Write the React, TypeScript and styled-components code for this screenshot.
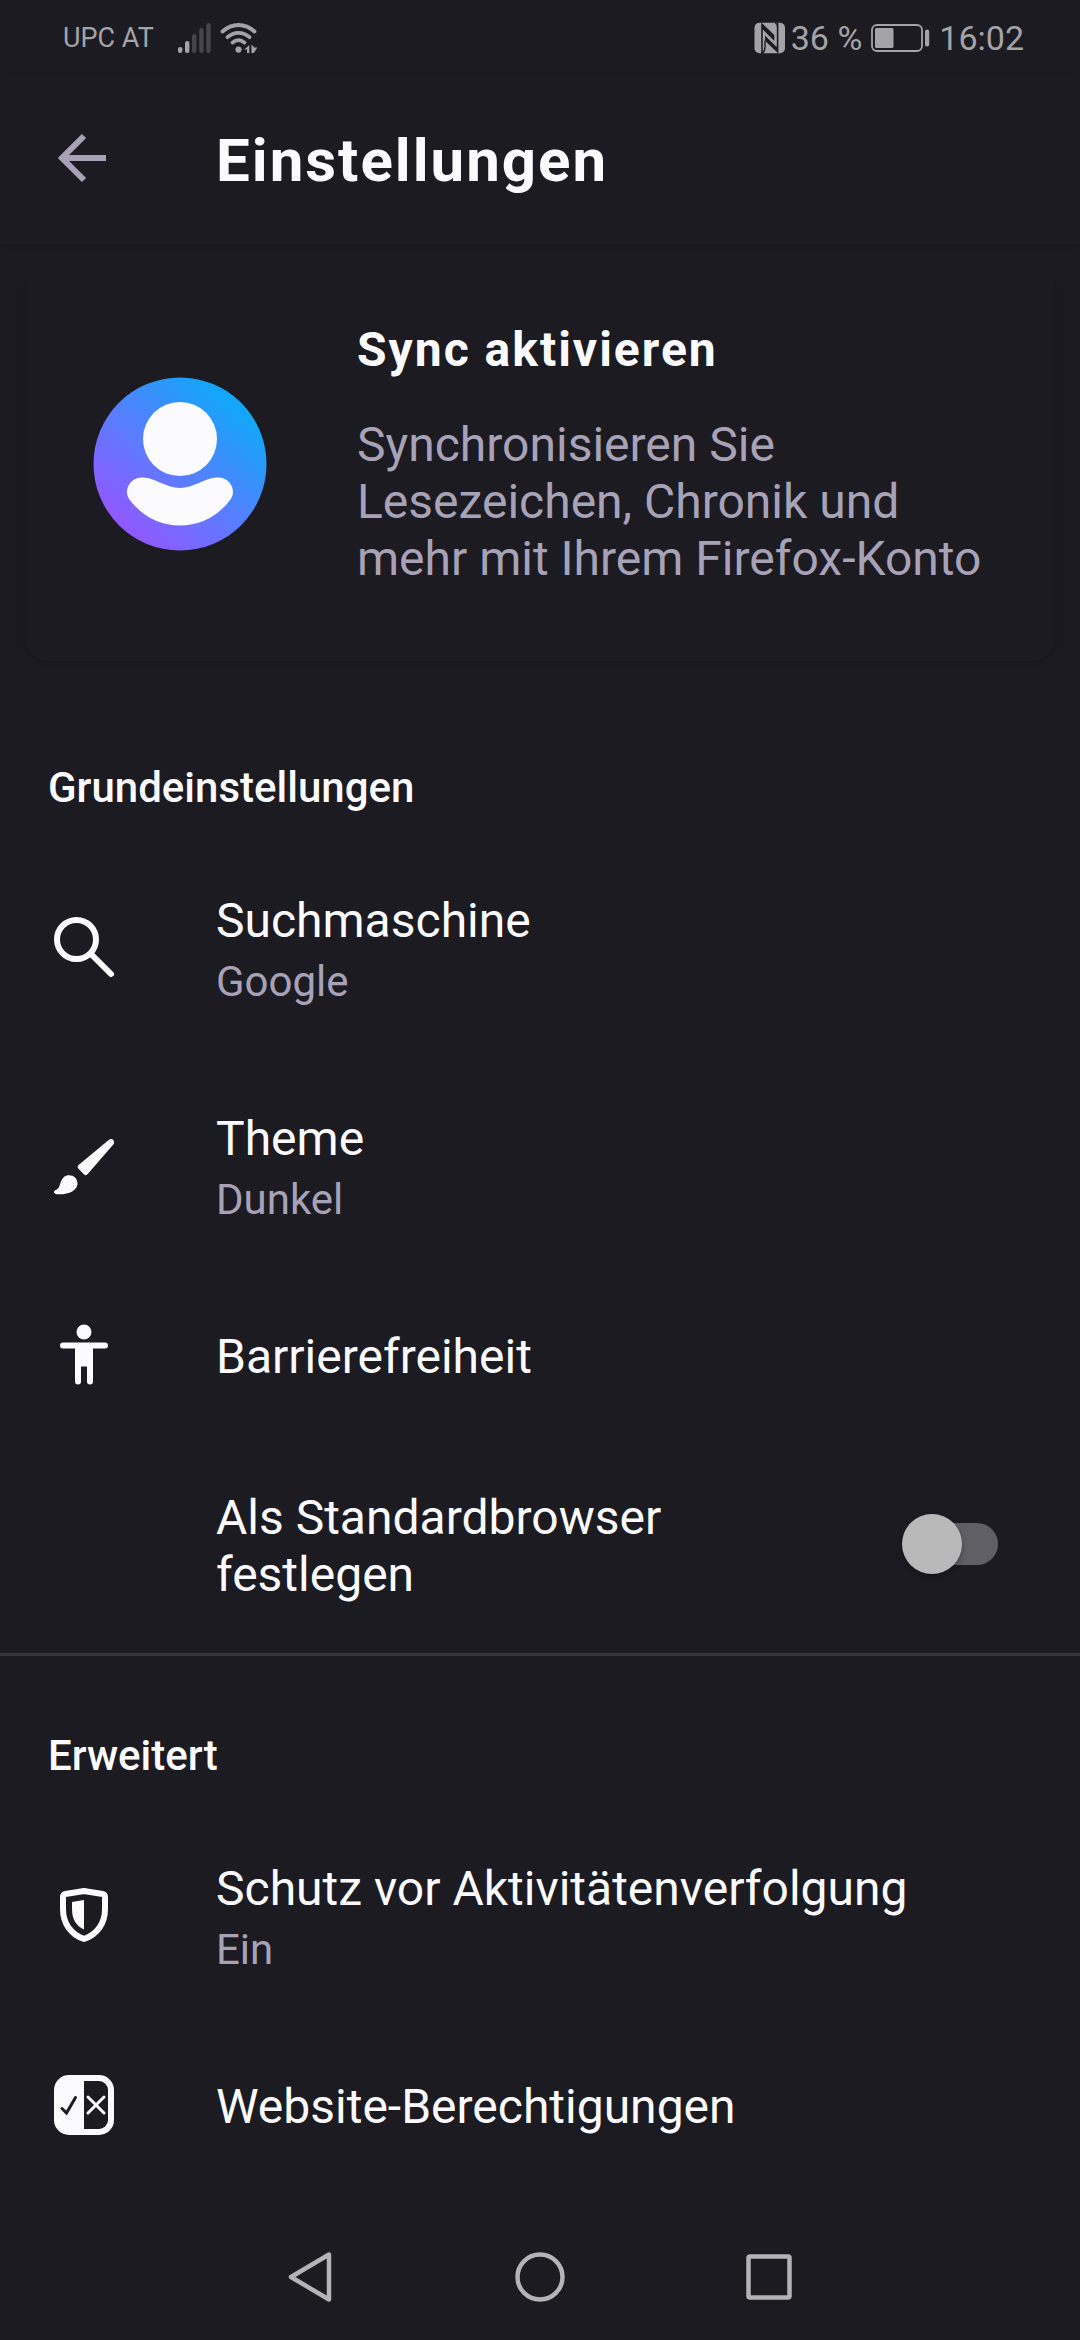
import React, { useState } from "react";
import styled, { createGlobalStyle } from "styled-components";

const color = {
  bg: "#1c1b22",
  text: "#fbfbfe",
  muted: "#a7a2b7",
  status: "#a4a3a8",
  nav: "#b4b3b6",
  divider: "#37363d",
};

const GlobalStyle = createGlobalStyle`
  *, *::before, *::after { box-sizing: border-box; }
  body {
    margin: 0;
    background: ${color.bg};
    color: ${color.text};
    font-family: Roboto, "Noto Sans", sans-serif;
  }
  button { font: inherit; color: inherit; background: none; border: 0; padding: 0; text-align: left; cursor: pointer; }
  h1, h2, p { margin: 0; }
  svg { display: block; flex: none; }
`;

const Screen = styled.div`
  display: flex;
  flex-direction: column;
  min-height: 100vh;
`;

const StatusBar = styled.div`
  display: flex;
  align-items: center;
  justify-content: space-between;
  height: 76px;
  padding: 0 56px 0 63px;
  color: ${color.status};
`;

const StatusGroup = styled.div<{ $gap: number }>`
  display: flex;
  align-items: center;
  gap: ${(p) => p.$gap}px;
`;

const Carrier = styled.span`
  font-size: 27px;
  line-height: 32px;
  margin-right: 16px;
`;

const StatusText = styled.span`
  font-size: 34px;
  line-height: 42px;
`;

const BatteryStatus = styled.span`
  display: flex;
  align-items: center;
  gap: 5px;
`;

const Toolbar = styled.header`
  display: flex;
  align-items: center;
  gap: 96px;
  height: 168px;
  padding: 0 48px;
  box-shadow: 0 2px 12px rgba(0, 0, 0, 0.16);
`;

const Title = styled.h1`
  padding-top: 2px;
  font-size: 60px;
  line-height: 70px;
  font-weight: 700;
  letter-spacing: 2px;
`;

const Main = styled.main`
  flex: 1;
`;

const SyncCard = styled.button`
  display: flex;
  align-items: center;
  gap: 90px;
  width: calc(100% - 50px);
  margin: 23px 25px 27px;
  padding: 54px 60px 74px 68px;
  border-radius: 24px;
  background: ${color.bg};
  box-shadow: 0 2px 10px rgba(0, 0, 0, 0.16);
`;

const AvatarBox = styled.span`
  margin-top: 20px;
`;

const SyncText = styled.span`
  display: flex;
  flex: 1;
  flex-direction: column;
  gap: 38px;
  font-size: 48px;
  line-height: 57px;
`;

const SyncTitle = styled.strong`
  font-weight: 700;
  letter-spacing: 2px;
`;

const SyncSummary = styled.span`
  color: ${color.muted};
`;

const Section = styled.section`
  & + & {
    border-top: 3px solid ${color.divider};
  }
`;

const SectionTitle = styled.h2`
  padding: 75px 48px 26px;
  font-size: 42px;
  line-height: 49px;
  font-weight: 500;
`;

const Row = styled.button`
  display: flex;
  align-items: center;
  width: 100%;
  gap: 96px;
  padding: 0 48px;
`;

const RowText = styled.span`
  display: flex;
  flex: 1;
  flex-direction: column;
  gap: 8px;
  padding: 54px 0 50px;
`;

const RowTitle = styled.span`
  font-size: 48px;
  line-height: 57px;
`;

const RowSummary = styled.span`
  font-size: 42px;
  line-height: 49px;
  color: ${color.muted};
`;

const SwitchRow = styled.label`
  display: flex;
  align-items: center;
  gap: 60px;
  padding: 0 82px 0 216px;
  cursor: pointer;
`;

const Switch = styled.input`
  appearance: none;
  position: relative;
  flex: none;
  width: 96px;
  height: 60px;
  margin: 0;
  cursor: pointer;

  &::before {
    content: "";
    position: absolute;
    inset: 9px 0 9px 6px;
    border-radius: 21px;
    background: #605f65;
  }

  &::after {
    content: "";
    position: absolute;
    top: 0;
    left: 0;
    width: 60px;
    height: 60px;
    border-radius: 50%;
    background: #b9b9b9;
    box-shadow: 0 3px 6px rgba(0, 0, 0, 0.3);
  }

  &:checked::after {
    left: 36px;
    background: #9059ff;
  }
`;

const NavBar = styled.nav`
  display: flex;
  align-items: center;
  justify-content: center;
  gap: 157px;
  height: 126px;
  color: ${color.nav};
`;

const SignalIcon = () => (
  <svg width="34" height="32" viewBox="0 0 34 32" fill="currentColor" aria-hidden="true">
    <rect x="0" y="25" width="4.400" height="6" rx="2" />
    <rect x="7" y="19" width="4.400" height="12" rx="2" />
    <g opacity="0.3">
      <rect x="14" y="12" width="4.400" height="19" rx="2" />
      <rect x="21.200" y="6" width="4.400" height="25" rx="2" />
      <rect x="28.300" y="1" width="4.400" height="30" rx="2" />
    </g>
  </svg>
);

const WifiIcon = () => (
  <svg width="38" height="32" viewBox="0 0 38 32" fill="none" stroke="currentColor" strokeWidth="3.800" strokeLinecap="round" aria-hidden="true">
    <path d="M2.500 9.500C12 .800 25 .800 34.500 9.500" />
    <path d="M7.500 15.200C14 9.300 23 9.300 29.500 15.200" />
    <path d="M12.500 20.600C16.200 17.300 20.800 17.300 24.500 20.600" />
    <circle cx="18.500" cy="27.600" r="3.100" fill="currentColor" stroke="none" />
    <path d="M29.300 23v8h-2.300v-3.600h-2.600zM31.500 23l.6 0 2.100 2.600h3.200l-3.600 5.400h-2.300z" fill="currentColor" stroke="none" />
  </svg>
);

const NfcIcon = () => (
  <svg width="32" height="32" viewBox="0 0 32 32" aria-hidden="true">
    <rect x="0.500" y="0.800" width="30.500" height="30.400" rx="5" fill="currentColor" />
    <g fill={color.bg}>
      <path d="M7.200 0.500L20.300 13V19L8.800 7.600V31.500H7.200z" />
      <path d="M11 13.500L20.800 23.200C22.600 25 22.800 26.500 22.800 20V0.500H24.400V31.500L11 18.800z" />
    </g>
    <path d="M20.300 0.800C22 2 22.800 3.500 22.800 6V0.800z" fill={color.bg} />
    <path d="M11 18.800V25C11 28.500 9.800 30.500 8 31.500" fill="none" stroke={color.bg} strokeWidth="1.400" />
  </svg>
);

const BatteryIcon = () => (
  <svg width="59" height="28" viewBox="0 0 59 28" aria-hidden="true">
    <rect x="1" y="1" width="50" height="26" rx="5" fill="none" stroke="currentColor" strokeWidth="1.800" />
    <rect x="4" y="4" width="18.500" height="20" rx="1.500" fill="currentColor" />
    <rect x="54" y="5.500" width="4.200" height="17" rx="2" fill="currentColor" />
  </svg>
);

const BackIcon = () => (
  <svg width="72" height="72" viewBox="0 0 72 72" fill="none" stroke={color.muted} strokeWidth="6" aria-hidden="true">
    <path d="M58 34H14M36 12L14 34l22 22" />
  </svg>
);

const AvatarIcon = () => (
  <svg width="174" height="174" viewBox="0 0 174 174" aria-hidden="true">
    <defs>
      <linearGradient id="avatar" x1="0.180" y1="0.860" x2="0.820" y2="0.140">
        <stop offset="0" stopColor="#9059ff" />
        <stop offset="0.500" stopColor="#5480ff" />
        <stop offset="1" stopColor="#10a8f8" />
      </linearGradient>
    </defs>
    <circle cx="87" cy="87" r="86.500" fill="url(#avatar)" />
    <circle cx="87" cy="62" r="37" fill={color.text} />
    <path
      d="M50 100.500C62 101 74 111 87 111s25-10 37-10.500c10-.5 16 7 16 14.500 0 5-3 8.500-7 13-12 13-28 20.500-46 20.500s-34-7.500-46-20.500c-4-4.500-7-8-7-13 0-7.500 6-15 16-14.500z"
      fill={color.text}
    />
  </svg>
);

const RowIcon = ({ children }: { children: React.ReactNode }) => (
  <svg width="72" height="72" viewBox="0 0 72 72" fill="currentColor" aria-hidden="true">
    {children}
  </svg>
);

const searchIcon = (
  <g fill="none" stroke="currentColor" strokeWidth="6" strokeLinecap="round">
    <circle cx="28.500" cy="28.500" r="19.500" />
    <path d="M43 43l20 20" />
  </g>
);

const brushIcon = (
  <>
    <path d="M61 10.800c3-2.200 6.800 1.400 4.500 4.500L39.500 45.200c-1 1.200-2.400 1.200-3.400.2l-5.800-5.800c-1-1-.9-2.500.3-3.500z" />
    <path d="M21 46.200c4.800 0 8.500 3.500 8.500 8.200C29.500 61.500 20 66 9 65.200c-3.400-.2-4-3.200-1.200-4.200 3-1.200 3.600-4 4.800-7.600 1.400-4.500 4.300-7.200 8.400-7.200z" />
  </>
);

const accessibilityIcon = (
  <>
    <circle cx="36" cy="13" r="7.500" />
    <path d="M15 23.500h42a3 3 0 0 1 0 6H45v33a3 3 0 0 1-6 0v-15h-6v15a3 3 0 0 1-6 0v-33H15a3 3 0 0 1 0-6z" />
  </>
);

const shieldIcon = (
  <>
    <path
      d="M36 12l18.500 3c1.600.3 2.500 1.300 2.500 3v12c0 14-7.500 25.500-21 30-13.500-4.500-21-16-21-30V18c0-1.700.9-2.700 2.500-3z"
      fill="none"
      stroke="currentColor"
      strokeWidth="6"
      strokeLinejoin="round"
    />
    <path d="M36 21v29.500C28 47 24 40 24 30v-7z" />
  </>
);

const permissionsIcon = (
  <>
    <rect x="6" y="6" width="60" height="60" rx="15" />
    <path d="M36 12h15a9 9 0 0 1 9 9v30a9 9 0 0 1-9 9H36z" fill={color.bg} />
    <path d="M14 39.500l4.500 4.500L27.500 28.500" fill="none" stroke={color.bg} strokeWidth="3" strokeLinecap="round" />
    <path d="M40 28l16 16M56 28L40 44" fill="none" stroke="currentColor" strokeWidth="3" strokeLinecap="round" />
  </>
);

type SettingProps = { icon: React.ReactNode; title: string; summary?: string };

const Setting = ({ icon, title, summary }: SettingProps) => (
  <Row type="button">
    <RowIcon>{icon}</RowIcon>
    <RowText>
      <RowTitle>{title}</RowTitle>
      {summary && <RowSummary>{summary}</RowSummary>}
    </RowText>
  </Row>
);

export default function App() {
  const [isDefault, setIsDefault] = useState(false);

  return (
    <Screen>
      <GlobalStyle />
      <StatusBar>
        <StatusGroup $gap={8}>
          <Carrier>UPC AT</Carrier>
          <SignalIcon />
          <WifiIcon />
        </StatusGroup>
        <StatusGroup $gap={9}>
          <BatteryStatus>
            <NfcIcon />
            <StatusText>36 %</StatusText>
          </BatteryStatus>
          <BatteryIcon />
          <StatusText>16:02</StatusText>
        </StatusGroup>
      </StatusBar>

      <Toolbar>
        <button type="button" aria-label="Zurück">
          <BackIcon />
        </button>
        <Title>Einstellungen</Title>
      </Toolbar>

      <Main>
        <SyncCard type="button">
          <AvatarBox>
            <AvatarIcon />
          </AvatarBox>
          <SyncText>
            <SyncTitle>Sync aktivieren</SyncTitle>
            <SyncSummary>Synchronisieren Sie Lesezeichen, Chronik und mehr mit Ihrem Firefox-Konto</SyncSummary>
          </SyncText>
        </SyncCard>

        <Section>
          <SectionTitle>Grundeinstellungen</SectionTitle>
          <Setting icon={searchIcon} title="Suchmaschine" summary="Google" />
          <Setting icon={brushIcon} title="Theme" summary="Dunkel" />
          <Setting icon={accessibilityIcon} title="Barrierefreiheit" />
          <SwitchRow>
            <RowText>
              <RowTitle>Als Standardbrowser festlegen</RowTitle>
            </RowText>
            <Switch type="checkbox" role="switch" checked={isDefault} onChange={(e) => setIsDefault(e.target.checked)} />
          </SwitchRow>
        </Section>

        <Section>
          <SectionTitle>Erweitert</SectionTitle>
          <Setting icon={shieldIcon} title="Schutz vor Aktivitätenverfolgung" summary="Ein" />
          <Setting icon={permissionsIcon} title="Website-Berechtigungen" />
        </Section>
      </Main>

      <NavBar aria-label="System">
        <button type="button" aria-label="Zurück">
          <svg width="72" height="72" viewBox="0 0 72 72" fill="none" stroke="currentColor" strokeWidth="4.500" strokeLinejoin="round">
            <path d="M54 13.500v45L16 36z" />
          </svg>
        </button>
        <button type="button" aria-label="Startseite">
          <svg width="72" height="72" viewBox="0 0 72 72" fill="none" stroke="currentColor" strokeWidth="4.500">
            <circle cx="36" cy="36" r="22.500" />
          </svg>
        </button>
        <button type="button" aria-label="Übersicht">
          <svg width="72" height="72" viewBox="0 0 72 72" fill="none" stroke="currentColor" strokeWidth="4.500">
            <rect x="15.500" y="15.500" width="41" height="41" rx="1.500" />
          </svg>
        </button>
      </NavBar>
    </Screen>
  );
}
